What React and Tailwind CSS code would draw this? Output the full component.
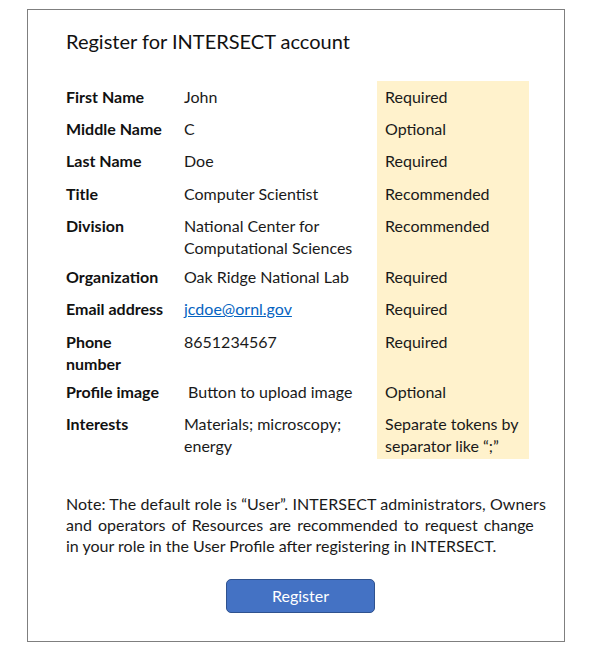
import React from "react";

const rows = [
  { label: "First Name", value: "John", status: "Required", h: "h-[32px]" },
  { label: "Middle Name", value: "C", status: "Optional", h: "h-[32px]" },
  { label: "Last Name", value: "Doe", status: "Required", h: "h-[33px]" },
  { label: "Title", value: "Computer Scientist", status: "Recommended", h: "h-[32px]" },
  { label: "Division", value: ["National Center for", "Computational Sciences"], status: "Recommended", h: "h-[51px]" },
  { label: "Organization", value: "Oak Ridge National Lab", status: "Required", h: "h-[32px]" },
  { label: "Email address", value: "email", status: "Required", h: "h-[33px]" },
  { label: ["Phone", "number"], value: "8651234567", status: "Required", h: "h-[50px]" },
  { label: "Profile image", value: "\u00a0Button to upload image", status: "Optional", h: "h-[32px]" },
  { label: "Interests", value: ["Materials; microscopy;", "energy"], status: ["Separate tokens by", "separator like \u201c;\u201d"], h: "h-[51px]" },
];

function Lines({ v }) {
  if (Array.isArray(v)) {
    return v.map((t, i) => <div key={i}>{t}</div>);
  }
  return <div>{v}</div>;
}

export default function App() {
  return (
    <div className="bg-white w-[600px] h-[649px] pt-[9px] pl-[27px]" style={{ fontFamily: "Lato, 'Open Sans', sans-serif" }}>
      <div className="w-[538px] h-[633px] border border-[#7f7f7f] pl-[38px] pt-[18px] text-[#1a1a1a] flex flex-col">
        <h1 className="text-[20px] leading-[26px] text-[#111]">Register for INTERSECT account</h1>
        <div className="mt-[27px] grid grid-cols-[118px_193px_152px] text-[16px] leading-[22px]">
          {rows.map((r, i) => (
            <React.Fragment key={i}>
              <div className={`${r.h} pt-[5px] font-bold text-[#111] whitespace-nowrap`}>
                <Lines v={r.label} />
              </div>
              <div className={`${r.h} pt-[5px] whitespace-nowrap`}>
                {r.value === "email" ? (
                  <a className="text-[#0563c1] underline" href="#">jcdoe@ornl.gov</a>
                ) : (
                  <Lines v={r.value} />
                )}
              </div>
              <div className={`${r.h} pt-[5px] pl-[8px] bg-[#fff2cc] whitespace-nowrap`}>
                <Lines v={r.status} />
              </div>
            </React.Fragment>
          ))}
        </div>
        <p className="mt-[34px] text-[16px] leading-[21px] text-[#1a1a1a] whitespace-nowrap">
          <span className="tracking-[0.1px]">Note: The default role is {"\u201cUser\u201d"}. INTERSECT administrators, Owners</span>
          <br />
          <span className="[word-spacing:2px]">and operators of Resources are recommended to request change</span>
          <br />
          in your role in the User Profile after registering in INTERSECT.
        </p>
        <div className="mt-[23px] pl-[160px]">
          <button className="w-[149px] h-[34px] rounded-[5px] bg-[#4472c4] border border-[#2f528f] text-white text-[16px] leading-[20px]">
            Register
          </button>
        </div>
      </div>
    </div>
  );
}
